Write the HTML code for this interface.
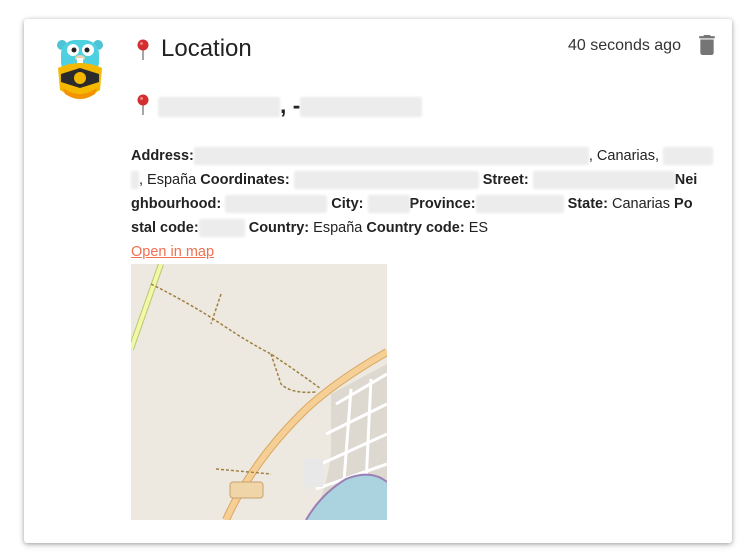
<!DOCTYPE html>
<html><head><style>
body{margin:0;width:754px;height:559px;background:#fff;font-family:"Liberation Sans",sans-serif;position:relative;overflow:hidden;color:#222}
.card{position:absolute;left:24px;top:19px;width:708px;height:524px;background:#fff;border-radius:3px;box-shadow:0 1px 4px rgba(0,0,0,.3),0 2px 8px rgba(0,0,0,.12)}
.a{position:absolute;white-space:nowrap}
.line{position:absolute;left:131px;font-size:14.5px;white-space:nowrap;height:24px;line-height:24px}
b{font-weight:bold;color:#222}
.bl{display:inline-block;background:#ececec;height:18px;vertical-align:middle;border-radius:2px;filter:blur(1px)}
</style></head><body>
<div class="card"></div>
<svg class="a" style="left:55px;top:38px" width="50" height="66" viewBox="0 0 50 66">
<ellipse cx="7" cy="7" rx="5" ry="5" fill="#4fc3d6"/><ellipse cx="43" cy="7" rx="5" ry="5" fill="#4fc3d6"/>
<rect x="6" y="2" width="38" height="36" rx="14" fill="#4fd0e0"/>
<circle cx="18" cy="12" r="6" fill="#fff"/><circle cx="33" cy="12" r="6" fill="#fff"/>
<circle cx="19" cy="12" r="2.5" fill="#222"/><circle cx="32" cy="12" r="2.5" fill="#222"/>
<ellipse cx="25" cy="20" rx="5" ry="3" fill="#e8d3b0"/><rect x="22" y="20" width="6" height="5" fill="#fff"/>
<path d="M3 30 Q25 20 47 30 L45 52 Q25 66 5 52 Z" fill="#f5b800"/>
<path d="M6 36 L25 30 L44 36 L44 44 L25 50 L6 44 Z" fill="#2b2b2b"/>
<circle cx="25" cy="40" r="6" fill="#f5b800"/>
<path d="M8 50 Q25 62 42 50 L40 56 Q25 66 10 56Z" fill="#f29300"/>
</svg>
<svg class="a" style="left:136px;top:39px" width="14" height="22" viewBox="0 0 14 22"><line x1="7" y1="10" x2="7" y2="21" stroke="#888" stroke-width="1.5"/><circle cx="7" cy="6" r="5.5" fill="#d32f2f"/><circle cx="5.5" cy="4.5" r="1.5" fill="#f08080"/></svg>
<div class="a" style="left:161px;top:35px;font-size:24px;color:#222">Location</div>
<div class="a" style="left:568px;top:37px;font-size:16px;color:#333">40 seconds ago</div>
<svg class="a" style="left:698px;top:35px" width="18" height="20" viewBox="0 0 14 18"><path d="M1 16a2 2 0 0 0 2 2h8a2 2 0 0 0 2-2V4H1zM14 1h-3.5l-1-1h-5l-1 1H0v2h14z" fill="#757575"/></svg>
<svg class="a" style="left:136px;top:94px" width="14" height="22" viewBox="0 0 14 22"><line x1="7" y1="10" x2="7" y2="21" stroke="#888" stroke-width="1.5"/><circle cx="7" cy="6" r="5.5" fill="#d32f2f"/><circle cx="5.5" cy="4.5" r="1.5" fill="#f08080"/></svg>
<div class="a" style="left:158px;top:92px;font-size:23px;font-weight:bold;color:#222"><span class="bl" style="width:122px;height:20px"></span>, -<span class="bl" style="width:122px;height:20px"></span></div>
<div class="line" style="top:144px"><b>Address:</b><span class="bl" style="width:395px"></span>, Canarias, <span class="bl" style="width:50px"></span></div>
<div class="line" style="top:168px"><span class="bl" style="width:8px"></span>, España <b>Coordinates:</b> <span class="bl" style="width:185px"></span> <b>Street:</b> <span class="bl" style="width:142px"></span><b>Nei</b></div>
<div class="line" style="top:192px"><b>ghbourhood:</b> <span class="bl" style="width:102px"></span> <b>City:</b> <span class="bl" style="width:42px"></span><b>Province:</b><span class="bl" style="width:88px"></span> <b>State:</b> Canarias <b>Po</b></div>
<div class="line" style="top:216px"><b>stal code:</b><span class="bl" style="width:46px"></span> <b>Country:</b> España <b>Country code:</b> ES</div>
<div class="line" style="top:240px;color:#f07050;text-decoration:underline">Open in map</div>
<svg class="a" style="left:131px;top:264px" width="256" height="256" viewBox="0 0 256 256">
<rect width="256" height="256" fill="#ede9e0"/>
<path d="M30 0 L0 85" stroke="#b8c870" stroke-width="6" fill="none"/><path d="M30 0 L0 85" stroke="#f3f7a8" stroke-width="4" fill="none"/>
<path d="M256 88 Q200 120 170 150 Q120 200 95 256" stroke="#d9a860" stroke-width="8" fill="none"/>
<path d="M256 88 Q200 120 170 150 Q120 200 95 256" stroke="#f5cf96" stroke-width="6" fill="none"/>
<path d="M20 20 Q60 40 90 60 Q120 80 140 90 Q170 110 190 125" stroke="#a08040" stroke-width="1.5" stroke-dasharray="3,2" fill="none"/>
<path d="M90 30 L80 60 M140 90 L150 120 Q160 130 185 128 M85 205 L140 210" stroke="#a08040" stroke-width="1.5" stroke-dasharray="3,2" fill="none"/>
<path d="M200 130 L256 100 L256 256 L180 256 Q195 230 200 190 Z" fill="#ddd8d0"/>
<path d="M205 140 L256 110 M195 170 L256 140 M190 200 L256 170 M185 225 L256 200 M220 125 L210 256 M240 115 L235 220" stroke="#fff" stroke-width="3" fill="none"/>
<path d="M175 256 Q190 230 215 215 Q240 205 256 218 L256 256Z" fill="#aad3df"/>
<path d="M175 256 Q190 230 215 215 Q240 205 256 218" stroke="#9b7fb5" stroke-width="2" fill="none"/>
<rect x="99" y="218" width="33" height="16" rx="3" fill="#f0d5a8" stroke="#c9a06a"/>
<rect x="172" y="195" width="20" height="28" fill="#e8e8e8"/>
</svg>
</body></html>
